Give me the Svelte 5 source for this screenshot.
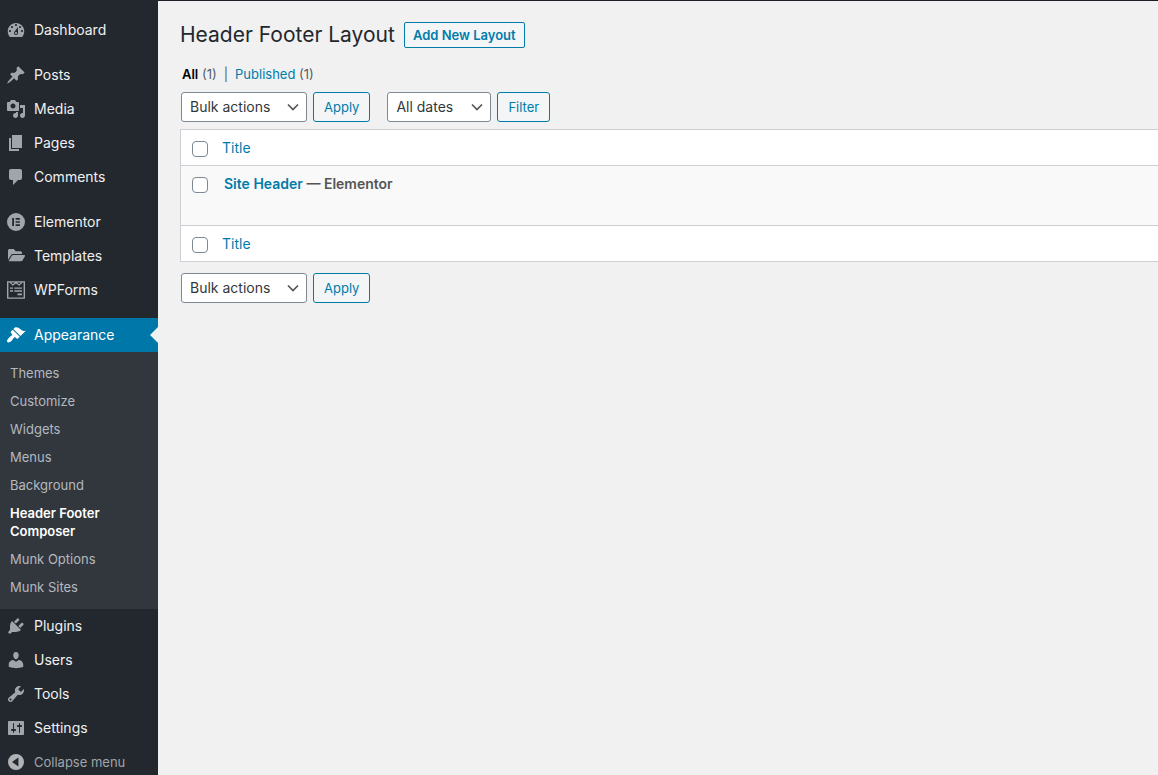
<script>
  const groups = [
    [
      { label: 'Dashboard', icon: 'dashboard' }
    ],
    [
      { label: 'Posts', icon: 'post' },
      { label: 'Media', icon: 'media' },
      { label: 'Pages', icon: 'page' },
      { label: 'Comments', icon: 'comments' }
    ],
    [
      { label: 'Elementor', icon: 'elementor' },
      { label: 'Templates', icon: 'templates' },
      { label: 'WPForms', icon: 'wpforms' }
    ],
    [
      {
        label: 'Appearance',
        icon: 'appearance',
        children: [
          'Themes',
          'Customize',
          'Widgets',
          'Menus',
          'Background',
          'Header Footer Composer',
          'Munk Options',
          'Munk Sites'
        ]
      },
      { label: 'Plugins', icon: 'plugins' },
      { label: 'Users', icon: 'users' },
      { label: 'Tools', icon: 'tools' },
      { label: 'Settings', icon: 'settings' }
    ]
  ];
  const currentChild = 'Header Footer Composer';

  const paths = {
    dashboard:
      'M3.76 17h12.48c1.34-1.64 2.01-3.63 2.01-5.65 0-4.6-3.66-8.35-8.25-8.35S1.75 6.75 1.75 11.35c0 2.02.67 4.01 2.01 5.65zM10 4c.55 0 1 .45 1 1s-.45 1-1 1-1-.45-1-1 .45-1 1-1zM6 6c.55 0 1 .45 1 1s-.45 1-1 1-1-.45-1-1 .45-1 1-1zM14 6c.55 0 1 .45 1 1s-.45 1-1 1-1-.45-1-1 .45-1 1-1zM8.63 11.55L12 7v6c0 1.1-.9 2-2 2s-2-.9-2-2c0-.57.24-1.08.63-1.45zM4 10c.55 0 1 .45 1 1s-.45 1-1 1-1-.45-1-1 .45-1 1-1zM16 10c.55 0 1 .45 1 1s-.45 1-1 1-1-.45-1-1 .45-1 1-1zM11 13c0-.55-.45-1-1-1s-1 .45-1 1 .45 1 1 1 1-.45 1-1z',
    post:
      'M10.44 3.02l1.82-1.82 6.36 6.35-1.83 1.82c-1.05-.68-2.48-.57-3.41.36l-.75.75c-.92.93-1.04 2.35-.35 3.41l-1.83 1.82-2.41-2.41-2.8 2.79c-.42.42-3.38 2.71-3.8 2.29s1.86-3.39 2.28-3.81l2.79-2.79L4.1 9.36l1.83-1.82c1.05.69 2.48.57 3.4-.36l.75-.75c.93-.92 1.05-2.35.36-3.41z',
    media:
      'M13 11V4c0-.55-.45-1-1-1h-1.67L9 1H5L3.67 3H2c-.55 0-1 .45-1 1v7c0 .55.45 1 1 1h10c.55 0 1-.45 1-1zM7 4.5c1.38 0 2.5 1.12 2.5 2.5S8.38 9.5 7 9.5 4.5 8.38 4.5 7 5.62 4.5 7 4.5zM14 6h5v10.5c0 1.38-1.12 2.5-2.5 2.5S14 17.88 14 16.5s1.12-2.5 2.5-2.5c.17 0 .34.02.5.05V9h-3V6zM10 14.05V13h2v3.5c0 1.38-1.12 2.5-2.5 2.5S7 17.88 7 16.5 8.12 14 9.5 14c.17 0 .34.02.5.05z',
    page: 'M6 15V2h10v13H6zM5 16h8v2H3V5h2v11z',
    comments:
      'M5 2h9c1.1 0 2 .9 2 2v7c0 1.1-.9 2-2 2h-2l-5 5v-5H5c-1.1 0-2-.9-2-2V4c0-1.1.9-2 2-2z',
    elementor:
      'M10 1a9 9 0 1 0 0 18a9 9 0 0 0 0-18zM6.2 6h1.8v8H6.2zM9.6 6h4.3v1.7H9.6zM9.6 9.15h4.3v1.7H9.6zM9.6 12.3h4.3V14H9.6z',
    templates:
      'M2 14V4.6C2 3.7 2.7 3 3.6 3h4.1l2 2.2h4.7c.9 0 1.6.7 1.6 1.6V8H7.2c-1 0-1.9.5-2.4 1.4zM2.6 15.2l3-5.2c.3-.6.9-.9 1.6-.9h11.1c.6 0 .9.6.6 1.1l-2.4 4.2c-.3.5-.8.8-1.4.8z',
    wpforms:
      'M1 1.2h18v17.6H1zM2.4 2.6v14.8h15.2V2.6h-1.1l-3.2 3.2L10 3.5 6.7 5.8 3.5 2.6zM5.2 2.6l1.6 1.6 2.2-1.6zM11 2.6l2.2 1.6 1.6-1.6zM4 7.4h3v1.4H4zM8.3 7.4H16v1.4H8.3zM4 10.3h3v1.4H4zM8.3 10.3H16v1.4H8.3zM11.5 13.5H16v1.8h-4.5z',
    appearance:
      'M14.48 11.06L7.41 3.99l1.5-1.5c.5-.56 2.3-.47 3.51.32 1.21.8 1.43 1.28 2.91 2.1 1.18.64 2.45 1.26 4.45.85zM13.77 11.77L6.7 4.7 4.93 6.47c-.39.39-.39 1.02 0 1.41l1.06 1.06c.39.39.39 1.03 0 1.42-.6.6-1.43 1.11-2.21 1.69-.35.26-.7.53-1.01.84C1.43 14.23.4 16.08 1.4 17.07c.99 1 2.84-.03 4.18-1.36.31-.31.58-.66.85-1.02.57-.78 1.08-1.61 1.69-2.21.39-.39 1.02-.39 1.41 0l1.06 1.06c.39.39 1.02.39 1.41 0z',
    plugins:
      'M13.11 4.36L9.87 7.6 8 5.73l3.24-3.24c.35-.34 1.05-.2 1.56.32.52.51.66 1.21.31 1.55zM5.11 6.13l.91-1.12 9.01 9.01-1.19.84c-.71.71-2.63 1.16-3.82 1.16H6.14L4.9 17.26c-.59.59-1.54.59-2.12 0-.59-.58-.59-1.53 0-2.12l1.24-1.24v-3.88c0-1.13.4-3.19 1.09-3.89zM12.37 10.1l3.24-3.24c.34-.35 1.04-.21 1.55.31.52.51.66 1.21.31 1.55l-3.24 3.25z',
    users:
      'M10 9.25c-2.27 0-2.73-3.44-2.73-3.44C7 4.02 7.82 2 9.97 2c2.16 0 2.98 2.02 2.71 3.81 0 0-.41 3.44-2.68 3.44zM10 11.82L12.72 10c2.39 0 4.52 2.33 4.52 4.53v2.49s-3.65 1.13-7.24 1.13c-3.65 0-7.24-1.13-7.24-1.13v-2.49c0-2.25 1.94-4.48 4.47-4.48z',
    tools:
      'M16.68 9.77c-1.34 1.34-3.3 1.67-4.95.99l-5.41 6.52c-.99.99-2.59.99-3.58 0s-.99-2.59 0-3.57l6.52-5.42c-.68-1.65-.35-3.61.99-4.95 1.28-1.28 3.12-1.62 4.72-1.06l-2.89 2.89 2.82 2.82 2.86-2.87c.53 1.58.18 3.39-1.08 4.65zM3.81 16.21c.4.39 1.04.39 1.43 0 .4-.4.4-1.04 0-1.43-.39-.4-1.03-.4-1.43 0-.39.39-.39 1.03 0 1.43z',
    settings:
      'M18 16V4c0-.55-.45-1-1-1H3c-.55 0-1 .45-1 1v12c0 .55.45 1 1 1h14c.55 0 1-.45 1-1zM8 11h1c.55 0 1 .45 1 1s-.45 1-1 1H8v1.5c0 .28-.22.5-.5.5s-.5-.22-.5-.5V13H6c-.55 0-1-.45-1-1s.45-1 1-1h1V5.5c0-.28.22-.5.5-.5s.5.22.5.5V11zM13 9h-1c-.55 0-1-.45-1-1s.45-1 1-1h1V5.5c0-.28.22-.5.5-.5s.5.22.5.5V7h1c.55 0 1 .45 1 1s-.45 1-1 1h-1v5.5c0 .28-.22.5-.5.5s-.5-.22-.5-.5V9z',
    collapse: 'M10 2a8 8 0 1 0 0 16a8 8 0 0 0 0-16zM12.4 5.6v8.8L6 10z'
  };
</script>

{#snippet icon(name)}
  <svg class="icon" viewBox="0 0 20 20" aria-hidden="true">
    <path fill-rule="evenodd" d={paths[name]} />
  </svg>
{/snippet}

{#snippet bulk(id)}
  <div class="control-group">
    <select {id} class="bulk-select" aria-label="Select bulk action">
      <option>Bulk actions</option>
      <option>Edit</option>
      <option>Move to Trash</option>
    </select>
    <button type="button" class="button">Apply</button>
  </div>
{/snippet}

<div class="admin">
  <nav class="sidebar" aria-label="Main menu">
    {#each groups as group}
      <ul class="menu">
        {#each group as item}
          <li>
            <a href="#top" class="menu-link" class:current={item.children}>
              {@render icon(item.icon)}
              <span>{item.label}</span>
            </a>
            {#if item.children}
              <ul class="submenu">
                {#each item.children as child}
                  <li><a href="#top" class:selected={child === currentChild}>{child}</a></li>
                {/each}
              </ul>
            {/if}
          </li>
        {/each}
      </ul>
    {/each}
    <button type="button" class="collapse">
      {@render icon('collapse')}
      <span>Collapse menu</span>
    </button>
  </nav>

  <main class="content">
    <header class="heading">
      <h1>Header Footer Layout</h1>
      <a href="#top" class="add-new">Add New Layout</a>
    </header>

    <ul class="views">
      <li><a href="#top" class="active">All</a> (1)</li>
      <li class="divider">|</li>
      <li><a href="#top">Published</a> (1)</li>
    </ul>

    <div class="toolbar">
      {@render bulk('bulk-top')}
      <div class="control-group">
        <select class="date-select" aria-label="Filter by date">
          <option>All dates</option>
        </select>
        <button type="button" class="button">Filter</button>
      </div>
    </div>

    <table>
      <thead>
        <tr>
          <td class="check"><input type="checkbox" aria-label="Select all" /></td>
          <th scope="col"><a href="#top">Title</a></th>
        </tr>
      </thead>
      <tbody>
        <tr>
          <td class="check"><input type="checkbox" aria-label="Select Site Header" /></td>
          <td class="title"><a href="#top">Site Header</a> — Elementor</td>
        </tr>
      </tbody>
      <tfoot>
        <tr>
          <td class="check"><input type="checkbox" aria-label="Select all" /></td>
          <th scope="col"><a href="#top">Title</a></th>
        </tr>
      </tfoot>
    </table>

    {@render bulk('bulk-bottom')}
  </main>
</div>

<style>
  :global(body) {
    margin: 0;
    background: #f1f1f1;
    font-family: Inter, 'Liberation Sans', sans-serif;
    font-size: 13px;
    color: #555d66;
  }

  * {
    box-sizing: border-box;
  }

  a {
    color: #007cab;
    text-decoration: none;
  }

  ul {
    list-style: none;
    margin: 0;
    padding: 0;
  }

  .admin {
    display: flex;
    min-height: 100vh;
  }

  .sidebar {
    flex: 0 0 158px;
    padding-top: 13px;
    background: #23282f;
  }

  .menu + .menu {
    margin-top: 11px;
  }

  .menu-link {
    position: relative;
    display: flex;
    align-items: center;
    gap: 8px;
    height: 34px;
    padding-left: 6px;
    font-size: 14px;
    line-height: 18px;
    color: #f0f0f1;
  }

  .icon {
    flex: none;
    width: 20px;
    height: 20px;
    fill: #a0a5ad;
  }

  .current {
    background: #0077a9;
    color: #fff;
  }

  .current .icon {
    fill: #fff;
  }

  .current::after {
    content: '';
    position: absolute;
    right: 0;
    top: 9px;
    border: 8px solid transparent;
    border-left-width: 0;
    border-right-color: #f1f1f1;
  }

  .submenu {
    padding: 7px 0 8px;
    background: #32373e;
  }

  .submenu a {
    display: block;
    padding: 5px 10px;
    line-height: 18px;
    color: #b4b9be;
  }

  .submenu .selected {
    color: #fff;
    font-weight: 600;
  }

  .collapse {
    display: flex;
    align-items: center;
    gap: 8px;
    width: 100%;
    height: 30px;
    padding: 3px 0 0 6px;
    border: 0;
    background: none;
    font: inherit;
    line-height: 18px;
    color: #a0a5aa;
  }

  .collapse .icon {
    fill: #b0b2b5;
  }

  .content {
    flex: 1;
    min-width: 0;
    padding: 20px 0 0 22px;
    border-top: 1px solid #1c1e26;
  }

  .heading {
    display: flex;
    align-items: center;
    gap: 9px;
  }

  h1 {
    margin: 0;
    font-size: 21px;
    font-weight: 400;
    line-height: 28px;
    color: #23282d;
  }

  .add-new {
    padding: 0 8px;
    border: 1px solid #007cab;
    border-radius: 2px;
    background: #f3f5f6;
    font-weight: 600;
    line-height: 24px;
  }

  .views {
    display: flex;
    gap: 7px;
    padding: 16px 0 8px 2px;
    line-height: 19px;
  }

  .views .active {
    color: #000;
    font-weight: 600;
  }

  .toolbar {
    display: flex;
    gap: 17px;
    margin-bottom: 7px;
  }

  .control-group {
    display: flex;
    gap: 6px;
    padding-left: 1px;
  }

  .toolbar .control-group + .control-group {
    padding-left: 0;
  }

  select {
    appearance: none;
    height: 30px;
    padding: 0 24px 2px 8px;
    border: 1px solid #7e8993;
    border-radius: 3px;
    background: #fff url("data:image/svg+xml,%3Csvg xmlns='http://www.w3.org/2000/svg' viewBox='0 0 12 8'%3E%3Cpath d='M1 1.5l5 5 5-5' fill='none' stroke='%23555' stroke-width='1.7'/%3E%3C/svg%3E") no-repeat right 7px center / 12px 8px;
    font-family: inherit;
    font-size: 14px;
    color: #32373c;
  }

  .bulk-select {
    width: 126px;
  }

  .date-select {
    width: 104px;
  }

  .button {
    height: 30px;
    padding: 0 10px;
    border: 1px solid #007cab;
    border-radius: 3px;
    background: #f3f5f6;
    font: inherit;
    color: #007cab;
  }

  table {
    width: 100%;
    margin-bottom: 11px;
    border: 1px solid #ccd0d4;
    border-right: 0;
    border-spacing: 0;
    background: #fff;
    font-size: 14px;
    line-height: 20px;
  }

  th,
  td {
    padding: 8px 10px;
    text-align: left;
    font-weight: 400;
    vertical-align: top;
  }

  th {
    height: 35px;
    padding: 8px 10px 7px 9px;
  }

  .check {
    width: 32px;
    padding: 11px 0 0 11px;
    line-height: 0;
  }

  input {
    appearance: none;
    width: 16px;
    height: 16px;
    margin: 0;
    border: 1px solid #7e8993;
    border-radius: 4px;
    background: #fff;
  }

  tbody td {
    height: 61px;
    border: solid #ccd0d4;
    border-width: 1px 0;
    background: #f9f9f9;
  }

  td.title {
    padding-left: 11px;
    font-weight: 600;
    color: #555;
  }
</style>
